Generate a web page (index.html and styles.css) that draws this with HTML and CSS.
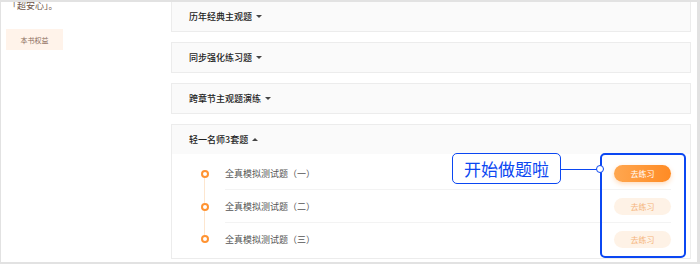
FILE: index.html
```html
<!DOCTYPE html>
<html lang="zh-CN">
<head>
  <meta charset="UTF-8" />
  <title>习题练习</title>
  <link rel="stylesheet" href="styles.css">
</head>
<body>
  <div class="frame">

    <!-- Colonne de gauche -->
    <aside class="sidebar">
      <p class="note">「超安心」。</p>
      <a class="rights" href="#">本书权益</a>
    </aside>

    <!-- Liste des blocs d'exercices -->
    <main class="groups">
      <section class="group">
        <div class="group-head">历年经典主观题<span class="caret"></span></div>
      </section>
      <section class="group">
        <div class="group-head">同步强化练习题<span class="caret"></span></div>
      </section>
      <section class="group">
        <div class="group-head">跨章节主观题演练<span class="caret"></span></div>
      </section>
      <section class="group open">
        <div class="group-head">轻一名师3套题<span class="caret up"></span></div>
        <div class="group-body">
          <div class="item first">
            <div class="rail"><i class="seg"></i><i class="dot"></i><i class="seg"></i></div>
            <div class="item-main">
              <span class="item-name">全真模拟测试题（一）</span>
              <a class="go active" href="#">去练习</a>
            </div>
          </div>
          <div class="item">
            <div class="rail"><i class="seg"></i><i class="dot"></i><i class="seg"></i></div>
            <div class="item-main">
              <span class="item-name">全真模拟测试题（二）</span>
              <a class="go" href="#">去练习</a>
            </div>
          </div>
          <div class="item last">
            <div class="rail"><i class="seg"></i><i class="dot"></i><i class="seg"></i></div>
            <div class="item-main">
              <span class="item-name">全真模拟测试题（三）</span>
              <a class="go" href="#">去练习</a>
            </div>
          </div>
        </div>
      </section>
    </main>

    <!-- Annotation par-dessus la page -->
    <div class="tip">开始做题啦</div>
    <div class="tip-line"></div>
    <div class="tip-node"></div>
    <div class="highlight"></div>
  </div>
</body>
</html>
```

FILE: styles.css
```css
:root {
  --orange: #ff9332;
  --blue: #0b47f2;
  --line: #ececec;
}

body {
  margin: 0;
  font-family: "Noto Sans CJK SC", "Noto Sans", sans-serif;
  background: #fff;
}

.frame {
  position: relative;
  width: 700px;
  height: 264px;
  box-sizing: border-box;
  border-style: solid;
  border-color: #e2e2e2;
  border-width: 2px 3px 2px 1px;
  display: flex;
  overflow: hidden;
  background: #fff;
}

/* Colonne de gauche */
.sidebar {
  width: 170px;
  flex: none;
  box-sizing: border-box;
  padding-left: 5px;
}

.note {
  margin: -2px 0 0 2px;
  font-size: 9px;
  line-height: 12px;
  color: #6e5546;
}

.rights {
  display: flex;
  align-items: center;
  justify-content: center;
  width: 57px;
  height: 21px;
  margin-top: 17px;
  background: #fff3ea;
  color: #8a6b5a;
  font-size: 7px;
  text-decoration: none;
}

/* Blocs */
.groups {
  width: 520px;
  flex: none;
  display: flex;
  flex-direction: column;
  gap: 10px;
  margin-top: -1px;
}

.group {
  border: 1px solid var(--line);
  background: #fafafa;
}

.group-head {
  height: 29px;
  display: flex;
  align-items: center;
  padding-left: 17px;
  font-size: 9px;
  font-weight: 500;
  color: #222;
}

.caret {
  width: 0;
  height: 0;
  margin-left: 4px;
  border-left: 3px solid transparent;
  border-right: 3px solid transparent;
  border-top: 3px solid #444;
}

.caret.up {
  border-top: none;
  border-bottom: 3px solid #444;
}

.group-body {
  background: #fff;
  padding: 3px 0;
}

.item {
  display: flex;
  height: 33px;
}

.item.last {
  height: 32px;
}

/* Ligne du temps à gauche des items */
.rail {
  width: 53px;
  flex: none;
  display: flex;
  flex-direction: column;
  align-items: center;
  padding-left: 12px;
  box-sizing: border-box;
}

.seg {
  flex: 1;
  width: 1px;
  background: #fde6cf;
}

.item.first .seg:first-child,
.item.last .seg:last-child {
  background: transparent;
}

.dot {
  flex: none;
  width: 4px;
  height: 4px;
  border: 2px solid var(--orange);
  border-radius: 50%;
  background: #fff;
}

.item-main {
  flex: 1;
  margin-right: 19px;
  display: flex;
  align-items: center;
  justify-content: space-between;
  border-bottom: 1px solid #f3f3f3;
  height: 32px;
}

.item.last .item-main {
  border-bottom: none;
}

.item-name {
  font-size: 9px;
  color: #555;
}

.go {
  width: 57px;
  height: 17px;
  border-radius: 9px;
  display: flex;
  align-items: center;
  justify-content: center;
  font-size: 8px;
  text-decoration: none;
  background: #fef2e6;
  color: #f5b47c;
}

.go.active {
  background: linear-gradient(90deg, #ffa750, #ff8b24);
  color: #fff;
  box-shadow: 0 2px 5px rgba(255, 140, 40, 0.3);
}

/* Annotation */
.tip {
  position: absolute;
  left: 451px;
  top: 151px;
  width: 107px;
  height: 29px;
  border: 1px solid var(--blue);
  border-radius: 5px;
  background: #fff;
  color: var(--blue);
  font-size: 17px;
  line-height: 29px;
  text-align: center;
}

.tip-line {
  position: absolute;
  left: 559px;
  top: 167px;
  width: 40px;
  height: 1px;
  background: var(--blue);
}

.tip-node {
  position: absolute;
  left: 595px;
  top: 163px;
  width: 6px;
  height: 6px;
  border: 1px solid var(--blue);
  border-radius: 50%;
  background: #fff;
  z-index: 2;
}

.highlight {
  position: absolute;
  left: 599px;
  top: 151px;
  width: 82px;
  height: 101px;
  border: 2px solid var(--blue);
  border-radius: 5px;
}
```
